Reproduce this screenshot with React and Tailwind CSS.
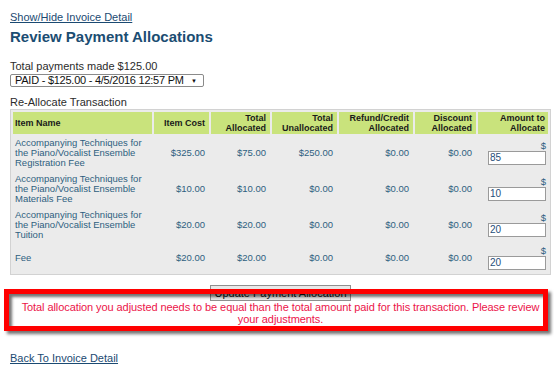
import React from "react";

const rows = [
  { name: ["Accompanying Techniques for", "the Piano/Vocalist Ensemble", "Registration Fee"], cost: "$325.00", alloc: "$75.00", unalloc: "$250.00", amt: "85" },
  { name: ["Accompanying Techniques for", "the Piano/Vocalist Ensemble", "Materials Fee"], cost: "$10.00", alloc: "$10.00", unalloc: "$0.00", amt: "10" },
  { name: ["Accompanying Techniques for", "the Piano/Vocalist Ensemble", "Tuition"], cost: "$20.00", alloc: "$20.00", unalloc: "$0.00", amt: "20" },
  { name: ["Fee"], cost: "$20.00", alloc: "$20.00", unalloc: "$0.00", amt: "20" },
];

export default function App() {
  const font = { fontFamily: '"Liberation Sans", Arial, sans-serif' };
  const th = "bg-[#c9e37c] text-[9px] font-bold leading-[10px] text-[#1a1a1a] py-[1px] align-middle";
  const td = "text-[9.5px] leading-[10px] text-[#2e5f80] py-[2px] align-middle text-right pr-[4px]";
  return (
    <div style={font} className="w-[554px] h-[375px] bg-white pl-[10px] pt-[11px] overflow-hidden">
      <div className="w-[541px]">
        <a className="block text-[11px] leading-[13px] text-[#1b4a72] underline w-max">Show/Hide Invoice Detail</a>
        <h1 className="mt-[4px] text-[15px] leading-[18px] font-bold text-[#1b4d72]">Review Payment Allocations</h1>
        <div className="mt-[14px] text-[11px] leading-[13px] text-[#2b2b2b]">Total payments made $125.00</div>
        <div className="mt-[1px] w-[194px] h-[13px] border border-[#8a8a8a] rounded-[2px] flex items-center pl-[4px] pr-[6px] text-[11px] leading-[11px] text-[#111]">
          <span className="flex-1 whitespace-nowrap tracking-[-0.25px]">PAID - $125.00 - 4/5/2016 12:57 PM</span>
          <span className="text-[6px] leading-[6px]">▼</span>
        </div>
        <div className="mt-[9px] text-[11px] leading-[13px] text-[#2b2b2b]">Re-Allocate Transaction</div>
        <table className="table-fixed border-separate border-spacing-[2px] border border-[#d2d2d2] bg-[#ebebeb] w-[541px]">
          <thead>
            <tr>
              <th className={`${th} w-[139px] text-left pl-[2px]`}>Item Name</th>
              <th className={`${th} w-[55px] text-right pr-[4px]`}>Item Cost</th>
              <th className={`${th} w-[59px] text-right pr-[4px]`}>Total<br />Allocated</th>
              <th className={`${th} w-[65px] text-right pr-[4px]`}>Total<br />Unallocated</th>
              <th className={`${th} w-[74px] text-right pr-[4px]`}>Refund/Credit<br />Allocated</th>
              <th className={`${th} w-[61px] text-right pr-[4px]`}>Discount<br />Allocated</th>
              <th className={`${th} w-[70px] text-right pr-[3px]`}>Amount to<br />Allocate</th>
            </tr>
          </thead>
          <tbody>
            {rows.map((r, i) => (
              <tr key={i}>
                <td className="text-[9.5px] leading-[10px] text-[#2e5f80] py-[2px] pl-[2px] align-middle text-left whitespace-nowrap">
                  {r.name.map((l, j) => (
                    <div key={j}>{l}</div>
                  ))}
                </td>
                <td className={td}>{r.cost}</td>
                <td className={td}>{r.alloc}</td>
                <td className={td}>{r.unalloc}</td>
                <td className={td}>$0.00</td>
                <td className={td}>$0.00</td>
                <td className="text-[9.5px] leading-[10px] text-[#2e5f80] py-[2px] pr-[2px] align-middle text-right">
                  <div>$</div>
                  <div className="flex justify-end">
                    <div className="w-[58px] h-[14px] border border-[#9a9a9a] bg-white text-left pl-[1px] text-[10px] leading-[12px] text-[#1f4e79]">{r.amt}</div>
                  </div>
                </td>
              </tr>
            ))}
          </tbody>
        </table>
        <div className="relative mt-[10px]">
          <div className="flex justify-center">
            <div className="w-[141px] h-[16px] border border-[#8f8f8f] bg-[#e8e8e8] text-[11px] leading-[14px] text-center text-[#111] whitespace-nowrap">Update Payment Allocation</div>
          </div>
          <div className="text-center text-[11px] leading-[12px] text-[#ec1449] tracking-[-0.08px]">
            <span className="whitespace-nowrap">Total allocation you adjusted needs to be equal than the total amount paid for this transaction. Please review</span>
            <br />
            your adjustments.
          </div>
          <div className="absolute top-[4px] -left-[6px] w-[544px] h-[42px] border-[5px] border-[#ff0000] shadow-[3px_3px_3px_rgba(0,0,0,0.55),inset_3px_3px_3px_rgba(0,0,0,0.55)]" />
        </div>
        <a className="mt-[27px] block text-[11px] leading-[13px] text-[#1b4a72] underline w-max">Back To Invoice Detail</a>
      </div>
    </div>
  );
}
